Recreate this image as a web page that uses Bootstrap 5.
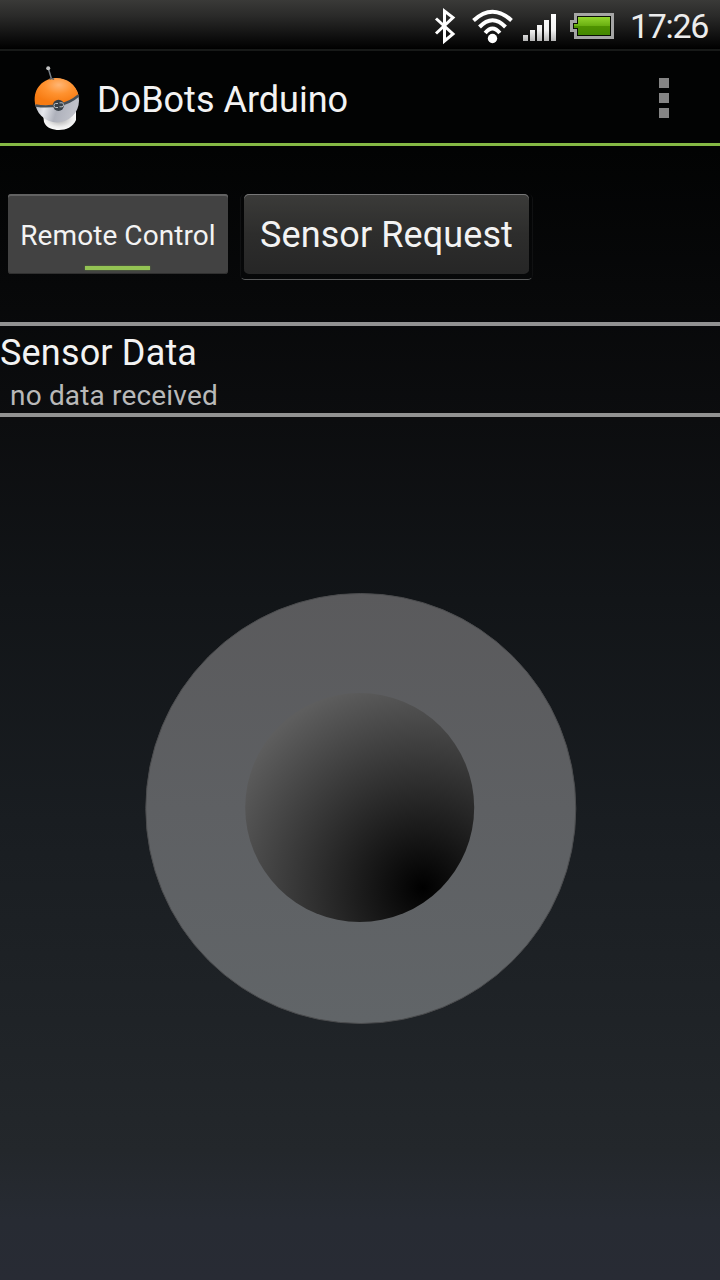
<!DOCTYPE html>
<html lang="en">
<head>
<meta charset="utf-8">
<meta name="viewport" content="width=device-width, initial-scale=1">
<title>DoBots Arduino</title>
<link href="https://cdn.jsdelivr.net/npm/bootstrap@5.3.0/dist/css/bootstrap.min.css" rel="stylesheet">
<style>
  body { font-family: Roboto, "Noto Sans", sans-serif; color: #f3f3f3; background: #000; overflow: hidden; }
  .screen { width: 720px; height: 1280px; background: linear-gradient(180deg, #000 0, #020303 150px, #0c0d0f 420px, #121518 600px, #191d21 820px, #1f2327 1020px, #23272b 1150px, #272b33 1220px, #282b34 1280px); }
  .statusbar { height: 51px; background: linear-gradient(180deg, #3a3a38 0, #2a2a29 16px, #0b0b0b 40px, #000 49px); border-bottom: 2px solid #171918; }
  .clock { font-size: 34px; line-height: 52px; letter-spacing: -1.3px; color: #ececec; }
  .actionbar { height: 95px; background: #020303; border-bottom: 3px solid #85b944; }
  .app-title { font-size: 36px; line-height: 44px; letter-spacing: 0; padding-top: 6px; }
  .controls { padding: 48px 0 0 8px; height: 176px; }
  .btn { --bs-btn-color: #f3f3f3; --bs-btn-hover-color: #fff; border: 0; padding: 0; white-space: nowrap; }
  .toggle { width: 220px; height: 80px; margin-right: 12px; border-radius: 3px; background: #424242 !important; box-shadow: inset 0 2px 0 #626262, inset 0 -1px 0 #303030; font-size: 28px; line-height: 84px; letter-spacing: .08px; }
  .indicator { left: 77px; top: 72px; width: 65px; height: 4px; background: #93c353; box-shadow: 0 0 2px #61803c; }
  .request-frame { width: 293px; height: 86px; padding: 0 3px; border: 1px solid #101112; border-top: 0; border-bottom-color: #58595a; border-radius: 5px; }
  .request { display: block; width: 285px; height: 80px; border-radius: 5px; background: linear-gradient(180deg, #3b3b39, #2d2d2c 50%, #262626) !important; box-shadow: inset 0 1px 0 #777; font-size: 36px; line-height: 82px; letter-spacing: .1px; }
  .sensor { height: 95px; border-top: 4px solid #929292; border-bottom: 4px solid #929292; }
  .sensor-title { font-size: 36px; line-height: 42px; padding-top: 6px; letter-spacing: .18px; }
  .sensor-value { font-size: 28px; line-height: 34px; padding: 5px 0 0 10px; color: #b9b9b9; letter-spacing: .17px; }
  .joystick { margin: 174px 0 0 143px; }
</style>
</head>
<body>
<main class="screen d-flex flex-column">
  <div class="statusbar d-flex flex-shrink-0">
    <svg class="flex-shrink-0" width="630" height="49" viewBox="0 0 630 49" aria-hidden="true">
      <defs>
        <linearGradient id="bars" x1="0" y1="14" x2="0" y2="41" gradientUnits="userSpaceOnUse"><stop stop-color="#fff"/><stop offset=".6" stop-color="#f2f2f2"/><stop offset="1" stop-color="#b5b5b5"/></linearGradient>
        <linearGradient id="charge" x1="0" y1="0" x2="0" y2="1"><stop stop-color="#92d52d"/><stop offset=".5" stop-color="#68ae10"/><stop offset=".51" stop-color="#4f9200"/><stop offset="1" stop-color="#438700"/></linearGradient>
      </defs>
      <path d="M436 18.5L453 34L444.500 41V11L453 17.500L436 33.500" fill="none" stroke="#fff" stroke-width="3"/>
      <g fill="none" stroke="#fff" stroke-width="4">
        <path d="M473.500 20.500Q492.500 3 511.500 20.500"/>
        <path d="M479.500 27Q492.500 13.500 505.500 27"/>
        <path d="M485.200 33Q492.500 24 499.800 33"/>
      </g>
      <circle cx="492.500" cy="38.500" r="4.700" fill="#fff"/>
      <path d="M523 35h5v6h-5zM530 30h5v11h-5zM537 25h5v16h-5zM544 20h5v21h-5zM551 14h5v27h-5z" fill="url(#bars)"/>
      <path d="M574 13h40v26h-40v-7h-4V20h4z" fill="#a5a5a5"/>
      <path d="M577 16h34v20h-34v-7h-4v-6h4z" fill="#090d04"/>
      <path d="M578 17h32v18h-32v-7h-4v-4h4z" fill="url(#charge)"/>
    </svg>
    <span class="clock">17:26</span>
  </div>

  <header class="actionbar d-flex align-items-center flex-shrink-0">
    <svg class="flex-shrink-0" width="97" height="92" viewBox="0 51 97 92" aria-hidden="true">
      <defs>
        <radialGradient id="shell" cx=".55" cy=".25" r=".65"><stop stop-color="#ffb675"/><stop offset=".5" stop-color="#ff922f"/><stop offset="1" stop-color="#f77b12"/></radialGradient>
        <linearGradient id="belly" x1="0" y1="0" x2="1" y2=".3"><stop stop-color="#9498a3"/><stop offset=".38" stop-color="#e6e8ed"/><stop offset=".65" stop-color="#aeb1bb"/><stop offset="1" stop-color="#bfc1c9"/></linearGradient>
        <radialGradient id="foot" cx=".5" cy=".45" r=".6"><stop stop-color="#aaa"/><stop offset=".65" stop-color="#eee"/><stop offset="1" stop-color="#fff"/></radialGradient>
      </defs>
      <path d="M43 114L44 122C46 128 53 130 59 130C66 130 73 127 76 120V111z" fill="url(#foot)"/>
      <path d="M48.500 69L51.500 79" stroke="#777e86" stroke-width="1.500"/>
      <circle cx="48.200" cy="68.200" r="2" fill="#c2c2c2"/>
      <circle cx="57" cy="100.500" r="22" fill="url(#belly)"/>
      <path d="M35.500 105C32 91 41 79 55 78C66 77.500 76 84 78.500 95Q70 102 58.500 104Q47 107 35.500 105z" fill="url(#shell)"/>
      <path d="M49.500 79.500Q51.500 77.500 54 79.500" fill="none" stroke="#59616a" stroke-width="1.500"/>
      <path d="M35.500 105.500Q47 107.500 58.500 105Q70 103 78.500 95.500" fill="none" stroke="#454e56" stroke-width="2.400"/>
      <circle cx="58.500" cy="105.300" r="5.600" fill="#384047"/>
      <path d="M58 103.500h-2.500q-1.500 0-1.500 2t1.500 2h2.500M59.500 102.800h2.500q1.500 0 1.500 2t-1.500 2h-2.500" fill="none" stroke="#b8bec4" stroke-width="1"/>
    </svg>
    <h1 class="app-title fw-normal mb-0 flex-grow-1">DoBots Arduino</h1>
    <svg class="flex-shrink-0" width="61" height="92" viewBox="659 51 61 92" role="img" aria-label="More options"><path d="M659 78h10v10h-10zM659 93h10v10h-10zM659 108h10v10h-10z" fill="#858585"/></svg>
  </header>

  <div class="controls d-flex align-items-start flex-shrink-0">
    <button class="btn toggle position-relative" type="button" aria-pressed="true">Remote Control<span class="indicator position-absolute"></span></button>
    <div class="request-frame"><button class="btn request" type="button">Sensor Request</button></div>
  </div>

  <section class="sensor flex-shrink-0">
    <h2 class="sensor-title fw-normal mb-0">Sensor Data</h2>
    <p class="sensor-value mb-0">no data received</p>
  </section>

  <svg class="joystick flex-shrink-0" width="436" height="436" viewBox="143 591 436 436" role="img" aria-label="Joystick">
    <defs>
      <linearGradient id="base" x1="0" y1="0" x2="0" y2="1"><stop stop-color="#5a5a5c"/><stop offset=".5" stop-color="#5e6063"/><stop offset="1" stop-color="#616568"/></linearGradient>
      <radialGradient id="knob" gradientUnits="userSpaceOnUse" cx="423" cy="888" r="215"><stop stop-color="#000"/><stop offset="1" stop-color="#5e5e5e"/></radialGradient>
    </defs>
    <circle cx="360.800" cy="808.500" r="215" fill="url(#base)" stroke="#4b4c4e" stroke-width="1"/>
    <circle cx="359.700" cy="807.500" r="114.500" fill="url(#knob)"/>
  </svg>
</main>
<script src="https://cdn.jsdelivr.net/npm/bootstrap@5.3.0/dist/js/bootstrap.bundle.min.js"></script>
</body>
</html>
